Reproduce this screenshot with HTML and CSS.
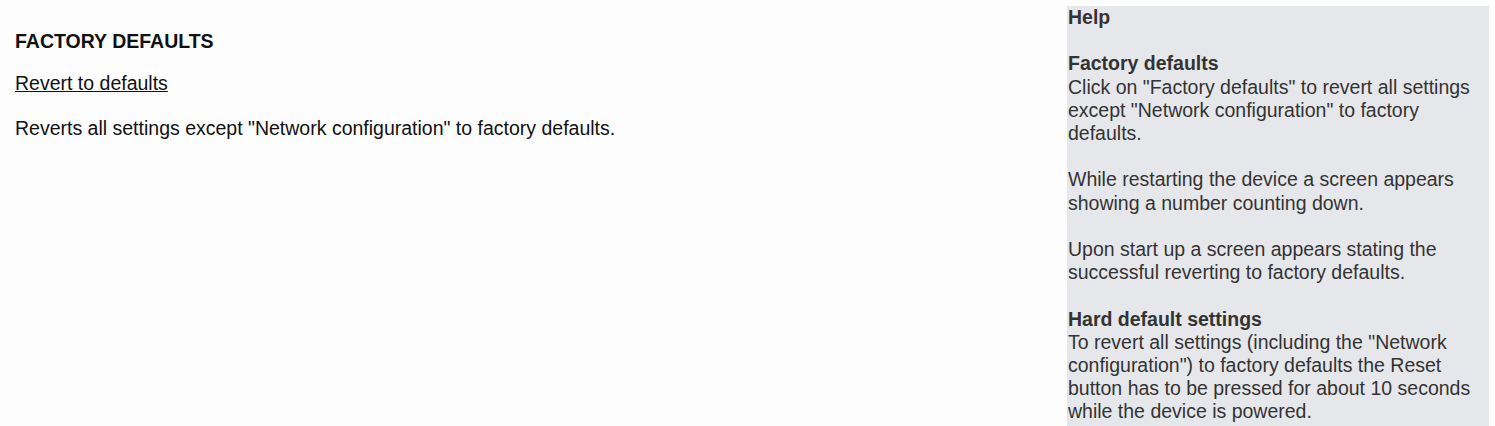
FILE: index.html
```html
<!DOCTYPE html>
<html lang="en">
<head>
<meta charset="utf-8">
<title>Factory defaults</title>
<link rel="stylesheet" href="styles.css">
</head>
<body>
<div class="layout">
  <main class="content">
    <h1 class="title">FACTORY DEFAULTS</h1>
    <p class="action"><a href="#" class="revert-link">Revert to defaults</a></p>
    <p class="desc">Reverts all settings except "Network configuration" to factory defaults.</p>
  </main>
  <aside class="help">
    <div class="help-title">Help</div>
    <div class="help-block">
      <div class="help-heading">Factory defaults</div>
      <p class="help-text">Click on "Factory defaults" to revert all settings except "Network configuration" to factory defaults.</p>
    </div>
    <div class="help-block">
      <p class="help-text">While restarting the device a screen appears showing a number counting down.</p>
    </div>
    <div class="help-block">
      <p class="help-text">Upon start up a screen appears stating the successful reverting to factory defaults.</p>
    </div>
    <div class="help-block">
      <div class="help-heading">Hard default settings</div>
      <p class="help-text">To revert all settings (including the "Network configuration") to factory defaults the Reset button has to be pressed for about 10 seconds while the device is powered.</p>
    </div>
  </aside>
</div>
</body>
</html>
```

FILE: styles.css
```css
html, body {
  margin: 0;
  padding: 0;
  background: #fdfdfd;
  font-family: "Liberation Sans", Arial, sans-serif;
}

.layout {
  display: flex;
  align-items: flex-start;
  height: 426px;
  overflow: hidden;
}

.content {
  flex: 1;
  padding: 30px 0 0 15px;
  color: #111;
  font-size: 19.5px;
  line-height: 23px;
}

.title {
  margin: 0;
  font-size: 19.5px;
  font-weight: bold;
  line-height: 23px;
}

.action {
  margin: 19px 0 0;
}

.revert-link {
  color: #111;
  text-decoration: underline;
}

.desc {
  margin: 22px 0 0;
}

.help {
  width: 421px;
  margin: 6px 6px 0 0;
  padding: 0 0 20px 1px;
  background: #e6e7eb;
  color: #333;
  font-size: 19.5px;
  line-height: 23.2px;
}

.help-title,
.help-heading {
  font-weight: bold;
}

.help-block {
  margin-top: 23.2px;
}

.help-text {
  margin: 0;
}
```
